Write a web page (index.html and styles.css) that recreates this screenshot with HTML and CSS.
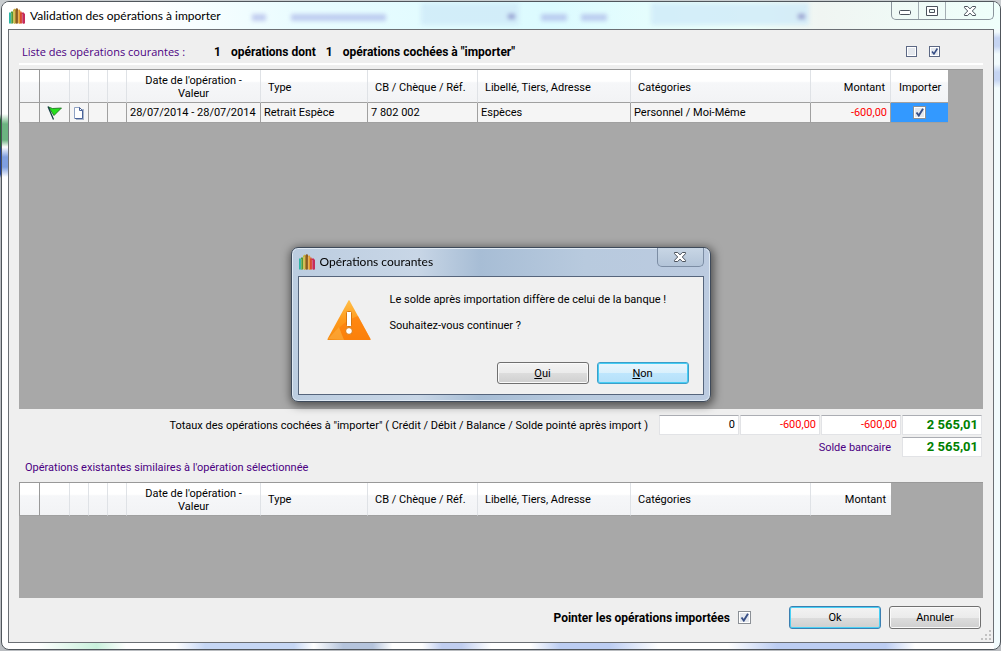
FILE: index.html
```html
<!DOCTYPE html>
<html lang="fr">
<head>
<meta charset="utf-8">
<title>Validation des opérations à importer</title>
<link rel="stylesheet" href="styles.css">
</head>
<body>
<svg class="defs" aria-hidden="true">
  <symbol id="logo" viewBox="0 0 16 16">
    <path fill="#2fb5a5" d="M0 5l1-1 1 1v10l-1 1-1-1z"/>
    <path fill="#4f9a3a" d="M2 4l1-1 1 1v11l-1 1-1-1z"/>
    <path fill="#c9b23c" d="M4 2l1.500-1.500L7 2v13l-1 1-2-1z"/>
    <path fill="#8c5b22" d="M6.500 1L8 0l1 1v14l-1 1-1.500-1z"/>
    <path fill="#e39a2b" d="M9 3l1-2 1.500 2v12l-1 1L9 15z"/>
    <path fill="#d8472f" d="M11 5l1-2 1 2v10l-1 1-1-1z"/>
    <path fill="#c52c5b" d="M13 5l1-1 2 2v9l-1 1-2-1z"/>
    <path stroke="#fff" stroke-opacity=".5" stroke-width=".6" d="M2.300 5v10M5 3v12M9.300 3v12M13.300 6v9"/>
  </symbol>
  <symbol id="cross" viewBox="0 0 14 12">
    <path fill="#fff" stroke="#4b525c" stroke-linejoin="round" d="M1.500 1.500h3.200L7 3.900l2.300-2.400h3.200v1.200L9.300 6l3.200 3.300v1.200H9.300L7 8.100l-2.300 2.400H1.500V9.300L4.700 6 1.500 2.700z"/>
  </symbol>
</svg>

<div class="window">
  <header class="titlebar">
    <div class="glass" aria-hidden="true">
      <i class="glass-text glass-a"></i>
      <i class="glass-text glass-b"></i>
      <i class="glass-box glass-c"></i>
      <i class="glass-text glass-d"></i>
      <i class="glass-text glass-f"></i>
      <i class="glass-box glass-e"></i>
    </div>
    <svg class="logo"><use href="#logo"/></svg>
    <h1 class="title">Validation des opérations à importer</h1>
    <div class="caption">
      <button class="cap" aria-label="Réduire"><svg width="14" height="12" viewBox="0 0 14 12"><rect x="1.500" y="5.500" width="11" height="4" rx="1" fill="#fff" stroke="#4b525c"/></svg></button>
      <button class="cap" aria-label="Agrandir"><svg width="14" height="12" viewBox="0 0 14 12"><path fill="#fff" fill-rule="evenodd" stroke="#4b525c" d="M1.500 1.500h11v9h-11zM4.500 4.500h5v3h-5z"/></svg></button>
      <button class="cap cap-close" aria-label="Fermer"><svg width="14" height="12"><use href="#cross"/></svg></button>
    </div>
  </header>

  <main class="client">
    <div class="summary">
      <h2 class="heading">Liste des opérations courantes :</h2>
      <div class="counts"><b>1</b><b>opérations dont</b><b>1</b><b>opérations cochées à "importer"</b></div>
      <div class="toggles">
        <input class="check check-small" type="checkbox" aria-label="Tout décocher">
        <input class="check check-small" type="checkbox" aria-label="Tout cocher" checked>
      </div>
    </div>

    <section class="grid grid-main">
      <table class="table">
        <colgroup><col class="c-head"><col class="c-flag"><col class="c-icon"><col class="c-icon"><col class="c-icon"><col class="c-date"><col class="c-type"><col class="c-ref"><col class="c-label"><col class="c-cat"><col class="c-amount"><col class="c-import"></colgroup>
        <thead>
          <tr><th class="rowhead"></th><th></th><th></th><th></th><th></th><th class="center">Date de l'opération - Valeur</th><th>Type</th><th>CB / Chèque / Réf.</th><th>Libellé, Tiers, Adresse</th><th>Catégories</th><th class="right">Montant</th><th class="center">Importer</th></tr>
        </thead>
        <tbody>
          <tr>
            <td class="rowhead"></td>
            <td class="icon"><svg width="16" height="16" viewBox="0 0 16 16"><path fill="#25e01c" stroke="#176a1c" stroke-width=".8" d="M1.500 2l4 1.500 9-.5-7.500 7.500z"/><path fill="none" stroke="#123c42" stroke-width="1.300" d="M1 1.500l5.500 13"/></svg></td>
            <td class="icon"><svg width="12" height="14" viewBox="0 0 12 14"><path fill="#a9b6c9" d="M3 3h8v11H3z"/><path fill="#fff" stroke="#8fa2c4" d="M1.500 1.500h5l3 3v8h-8z"/><path fill="none" stroke="#4a639a" d="M2 12.500h7.500v-8l-3-3v3h3"/></svg></td>
            <td></td><td></td>
            <td class="date">28/07/2014 - 28/07/2014</td><td>Retrait Espèce</td><td>7 802 002</td><td>Espèces</td><td>Personnel / Moi-Même</td><td class="right negative">-600,00</td>
            <td class="selected"><input class="check" type="checkbox" aria-label="Importer" checked></td>
          </tr>
        </tbody>
      </table>
    </section>

    <section class="totals">
      <div class="total-row">
        <span id="totals-label" class="totals-label">Totaux des opérations cochées à "importer" ( Crédit / Débit / Balance / Solde pointé après import )</span>
        <div class="fields">
          <input class="field" aria-labelledby="totals-label" value="0" readonly>
          <input class="field negative" aria-labelledby="totals-label" value="-600,00" readonly>
          <input class="field negative" aria-labelledby="totals-label" value="-600,00" readonly>
          <input class="field positive" aria-labelledby="totals-label" value="2 565,01" readonly>
        </div>
      </div>
      <div class="total-row">
        <label class="bank" for="bank">Solde bancaire</label>
        <input class="field positive" id="bank" value="2 565,01" readonly>
      </div>
    </section>

    <h2 class="heading similar">Opérations existantes similaires à l'opération sélectionnée</h2>
    <section class="grid grid-similar">
      <table class="table table-similar">
        <colgroup><col class="c-head"><col class="c-flag"><col class="c-icon"><col class="c-icon"><col class="c-icon"><col class="c-date"><col class="c-type"><col class="c-ref"><col class="c-label"><col class="c-cat"><col class="c-amount"></colgroup>
        <thead>
          <tr><th class="rowhead"></th><th></th><th></th><th></th><th></th><th class="center">Date de l'opération - Valeur</th><th>Type</th><th>CB / Chèque / Réf.</th><th>Libellé, Tiers, Adresse</th><th>Catégories</th><th class="right">Montant</th></tr>
        </thead>
      </table>
    </section>

    <footer class="footer">
      <label class="point" for="point">Pointer les opérations importées</label>
      <input class="check" id="point" type="checkbox" checked>
      <div class="actions">
        <button class="button button-ok">Ok</button>
        <button class="button">Annuler</button>
      </div>
      <svg class="grip" width="10" height="10" viewBox="0 0 10 10" aria-hidden="true"><path fill="#c2c2c2" d="M8 0h2v2H8zM8 4h2v2H8zM8 8h2v2H8zM4 4h2v2H4zM4 8h2v2H4zM0 8h2v2H0z"/></svg>
    </footer>
  </main>
  <div class="bottom-glass" aria-hidden="true"></div>
</div>

<div class="overlay">
  <div class="dialog" role="alertdialog" aria-labelledby="dialog-title">
    <header class="dialog-bar">
      <svg class="logo"><use href="#logo"/></svg>
      <h2 class="title" id="dialog-title">Opérations courantes</h2>
      <button class="dialog-close" aria-label="Fermer"><svg width="14" height="12"><use href="#cross"/></svg></button>
    </header>
    <div class="dialog-body">
      <div class="message">
        <svg class="warning" width="46" height="44" viewBox="0 0 46 44" aria-hidden="true">
          <defs><linearGradient id="orange" x1="0" y1="0" x2="0" y2="1"><stop offset="0" stop-color="#ffc04a"/><stop offset=".5" stop-color="#ff9a1c"/><stop offset="1" stop-color="#f58a10"/></linearGradient></defs>
          <path fill="url(#orange)" d="M22.500 1.500Q23 .5 23.500 1.500L44.500 40q.5 1-.7 1H2.200q-1.200 0-.7-1z"/>
          <path fill="#ff7a08" d="M13 29q9-9 19-12L44.500 40q.5 1-.7 1H18z" opacity=".6"/>
          <path fill="#ffb44a" d="M2 40l11-12 5 13z" opacity=".5"/>
          <rect x="20.500" y="12.500" width="5" height="15" rx="1" fill="#fff" stroke="#d9760c"/>
          <circle cx="23" cy="32" r="3.400" fill="#fff" stroke="#d9760c"/>
        </svg>
        <div class="message-text"><p>Le solde après importation diffère de celui de la banque !</p><p>Souhaitez-vous continuer ?</p></div>
      </div>
      <div class="actions">
        <button class="button"><u>O</u>ui</button>
        <button class="button button-focus"><u>N</u>on</button>
      </div>
    </div>
  </div>
</div>
</body>
</html>
```

FILE: styles.css
```css
* { box-sizing: border-box; }

body {
  margin: 0;
  height: 100vh;
  padding: 1px 0 1px 1px;
  background: linear-gradient(#c9cdd0 0 114px, #1d6b30 120px 145px, #1c3f9c 150px 174px, #b9bcc0 178px);
  color: #000;
  font-family: Roboto, "Liberation Sans", sans-serif;
  font-size: 11px;
  line-height: 14px;
}

h1, h2, p { margin: 0; font-size: inherit; font-weight: normal; }
button, input { font: inherit; color: inherit; margin: 0; }
.defs { position: absolute; width: 0; height: 0; }

.window {
  display: flex;
  flex-direction: column;
  height: 100%;
  padding: 0 6px;
  border: 1px solid #50565c;
  border-radius: 8px;
  background:
    linear-gradient(transparent 0 112px, #6cb481 122px 138px, transparent 145px, #7f9fe0 155px 165px, transparent 175px) left / 6px 100% no-repeat,
    linear-gradient(#f2fbfd 0 30px, #c5d4f2 36px 44px, #f2fbfd 52px 62px, #c5d4f2 70px 78px, #f2fbfd 86px) right / 6px 100% no-repeat,
    #fff;
  overflow: hidden;
}

.titlebar {
  position: relative;
  display: flex;
  align-items: center;
  flex: none;
  height: 27px;
  margin: 0 -6px;
  padding: 0 0 0 7px;
  background: linear-gradient(90deg, #fff 0 14%, #e9fcff 30%, #dcfbff 55%, #eefffb 75%, #f0f5f2 82%, #effffb);
}
.logo { position: relative; flex: none; width: 16px; height: 16px; }
.title {
  position: relative;
  margin-left: 5px;
  font-family: Lato, "Open Sans", sans-serif;
  font-size: 12px;
  line-height: 16px;
}
.glass { position: absolute; inset: 0; overflow: hidden; }
.glass-text, .glass-box { position: absolute; filter: blur(2px); }
.glass-text { top: 12px; height: 7px; background: #a3aee6; opacity: .6; }
.glass-box { top: 1px; height: 22px; background: #cfeaf8; opacity: .8; }
.glass-box::after { content: ""; position: absolute; right: 4px; top: 11px; width: 7px; height: 5px; background: #7f86c4; }
.glass-a { left: 25%; width: 14px; }
.glass-b { left: 29%; width: 95px; }
.glass-c { left: 42%; width: 98px; }
.glass-d { left: 54%; width: 26px; }
.glass-e { left: 65%; width: 158px; }
.glass-f { left: 58%; width: 26px; }

.caption { display: flex; align-self: flex-start; margin-left: auto; margin-right: 6px; position: relative; border: 1px solid #8a949c; border-top: 0; border-radius: 0 0 5px 5px; }
.cap { display: grid; place-items: center; width: 27px; height: 17px; padding: 0; border: 0; border-right: 1px solid #a4adb3; background: none; }
.cap-close { width: 47px; border-right: 0; }

.client {
  display: flex;
  flex-direction: column;
  flex: 1;
  min-height: 0;
  padding: 0 10px;
  border: 1px solid #6b6f74;
  background: #efefef;
}

.summary { display: flex; align-items: center; flex: none; height: 35px; padding: 10px 43px 0 3px; margin-bottom: 4px; border-bottom: 2px solid #fff; }
.heading { color: #4b0082; }
.summary .heading { font-family: "Open Sans", sans-serif; }
.counts { display: flex; gap: 10px; margin-left: 29px; font-size: 12px; }
.toggles { display: flex; gap: 12px; margin-left: auto; }

.check {
  flex: none;
  appearance: none;
  width: 13px;
  height: 13px;
  border: 1px solid #8b9096;
  background: #e4e8ee;
  box-shadow: inset 0 0 0 1px #fff;
  vertical-align: middle;
}
.check:checked { background: #e4e8ee url("data:image/svg+xml,%3Csvg xmlns='http://www.w3.org/2000/svg' viewBox='0 0 11 11'%3E%3Cpath d='M2.500 5.500l2.300 3L9 1.800' fill='none' stroke='%23384f86' stroke-width='1.900'/%3E%3C/svg%3E") center / 11px 11px no-repeat; }
.check-small { width: 11px; height: 11px; border-color: #5c6884; }
.check-small:checked { background-size: 9px 9px; }

.grid { background: #a8a8a8; border-top: 1px solid #999; min-height: 0; overflow: hidden; }
.grid-main { flex: 340; }
.grid-similar { flex: 116; }

.table { width: 929px; table-layout: fixed; border-collapse: separate; border-spacing: 0; }
.table-similar { width: 872px; }
.c-head { width: 21px; }
.c-flag { width: 30px; }
.c-icon { width: 19px; }
.c-date { width: 134px; }
.c-type { width: 107px; }
.c-ref { width: 110px; }
.c-label { width: 153px; }
.c-cat { width: 180px; }
.c-amount { width: 80px; }
.c-import { width: 57px; }

.table th {
  height: 33px;
  padding: 2px 5px 0 7px;
  border-right: 1px solid #dfe2e6;
  border-bottom: 1px solid #a0a0a0;
  background: linear-gradient(#fff 0 35%, #f6f7f9 40%, #f2f3f5);
  font-weight: normal;
  line-height: 13px;
  text-align: left;
  white-space: nowrap;
}
.table th.center { padding: 2px 8px 0; text-align: center; white-space: normal; }
.table td {
  height: 20px;
  padding: 1px 3px 0;
  border-right: 1px solid #a0a0a0;
  border-bottom: 1px solid #a0a0a0;
  background: #f5f5f5;
  white-space: nowrap;
}
.table .rowhead { border-left: 1px solid #999; border-right-color: #999; }
.table .right { text-align: right; }
.table td.icon { padding: 0; text-align: center; }
.icon svg { display: block; margin: 0 auto; }
.table td.selected { background: #3399ff; border-right: 0; padding: 0; text-align: center; line-height: 12px; }
.table th:last-child { border-right: 0; }
.negative { color: #f00; }
.positive { color: #008000; font-size: 13px; font-weight: bold; }

.totals { display: flex; flex-direction: column; gap: 2px; flex: none; padding: 6px 1px 0 0; }
.total-row { display: flex; align-items: center; justify-content: flex-end; gap: 11px; }
.totals-label, .bank { padding-top: 2px; }
.fields { display: flex; gap: 1px; }
.field { width: 80px; height: 20px; padding: 0 3px; border: 1px solid #e2e3e6; border-top-color: #abadb3; background: #fff; text-align: right; }
.bank { color: #4b0082; }
.similar { flex: none; height: 25px; padding: 4px 6px 0; }

.footer { position: relative; display: flex; align-items: flex-start; justify-content: flex-end; flex: none; height: 44px; padding: 8px 2px 0 0; }
.point { margin: 5px 8px 0 0; font-size: 12px; font-weight: bold; }
.footer .check { margin: 5px 38px 0 0; }
.grip { position: absolute; right: -8px; bottom: 2px; }

.actions { display: flex; gap: 8px; }
.button {
  width: 92px;
  height: 23px;
  padding: 1px 0 0;
  border: 1px solid #707070;
  border-radius: 3px;
  background: linear-gradient(#f3f3f3, #ebebeb 50%, #dddddd 50%, #cfcfcf);
  box-shadow: inset 0 0 0 1px #fafafa;
}
.button-ok { border-color: #3c7fb1; box-shadow: inset 0 0 0 1px #48d0f5; }
.button-focus {
  border-color: #3c9fc9;
  background: linear-gradient(#eaf6fd, #d9f0fc 50%, #bee6fd 50%, #b5e0f8);
  box-shadow: inset 0 0 0 1px #46cdf4;
}

.bottom-glass { flex: none; height: 6px; background: linear-gradient(90deg, #fff 3%, #c9f0dc 9%, #fff 12% 17%, #c6d7f5 20% 29%, #fff 31%, #b5c4dc 34% 37%, #fff 39% 42%, #c0cef0 44% 46%, #fff 49% 53%, #bccdf2 56% 61%, #fff 66% 73%, #bccdf2 78% 89%, #fff 92%); }

.overlay { position: fixed; inset: 0; display: grid; place-items: center; padding-bottom: 2px; }
.dialog {
  width: 420px;
  padding: 0 6px 6px;
  border: 1px solid #3e4a5a;
  border-radius: 7px;
  background: linear-gradient(90deg, #bccde0, #c8d6e6 30%, #a7bdd5 45%, #b8cade 70%, #bccbe0);
  box-shadow: inset 0 0 0 1px #dfe9f3, 1px 2px 9px 2px rgba(0, 0, 0, .5);
}
.dialog-bar { display: flex; align-items: center; height: 28px; padding-left: 1px; }
.dialog-close { display: grid; place-items: center; align-self: flex-start; width: 47px; height: 19px; margin-left: auto; padding: 0; border: 1px solid #7c8da4; border-top: 0; border-radius: 0 0 5px 5px; background: linear-gradient(#c8d6e5, #b3c4d8); }
.dialog-body { height: 119px; padding: 16px 14px 0 27px; border: 1px solid #56657c; background: #f0f0f0; }
.message { display: flex; gap: 18px; height: 69px; }
.warning { flex: none; margin-top: 6px; }
.message-text { display: grid; gap: 12px; align-content: start; }
.dialog .actions { justify-content: flex-end; }
.dialog .button { height: 22px; }
```
